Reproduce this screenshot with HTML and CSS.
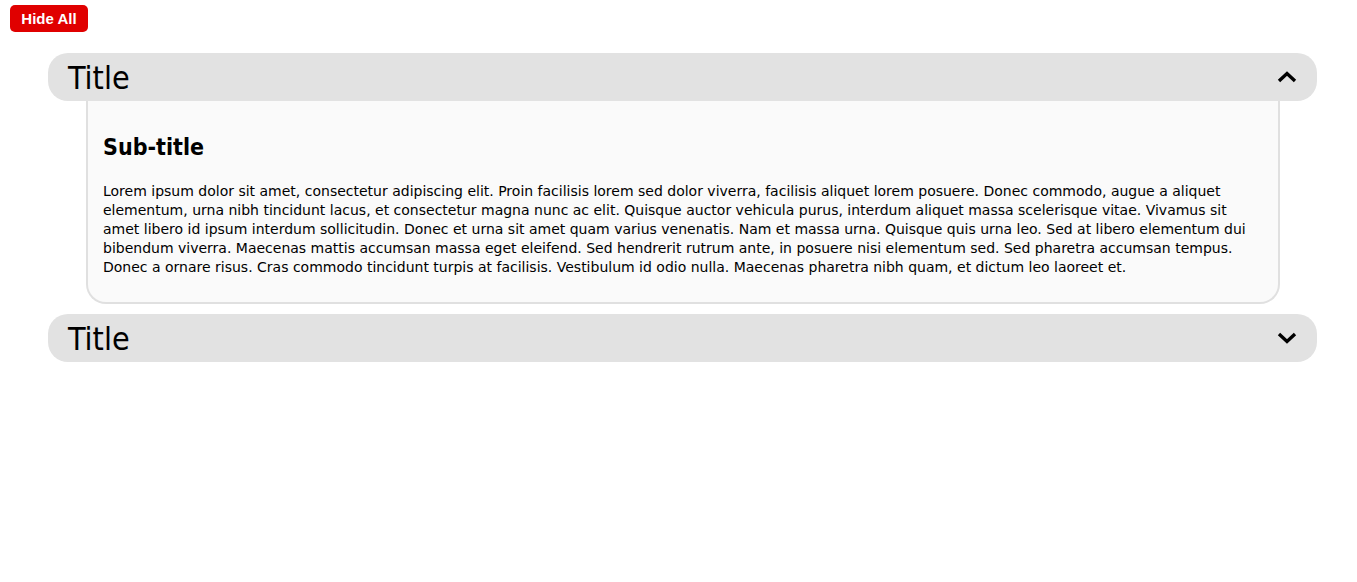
FILE: index.html
```html
<!DOCTYPE html>
<html>
<head>
<meta charset="utf-8">
<link rel="stylesheet" href="styles.css">
</head>
<body>
<div class="toolbar"><button class="hide-all">Hide All</button></div>
<div class="accordion">
  <div class="item open">
    <div class="header">
      <span class="title">Title</span>
      <svg class="chev" width="20" height="12" viewBox="0 0 20 12"><path d="M2 10 L10 2.5 L18 10" fill="none" stroke="#000" stroke-width="3.4"/></svg>
    </div>
    <div class="panel">
      <h2 class="subtitle">Sub-title</h2>
      <p class="text">Lorem ipsum dolor sit amet, consectetur adipiscing elit. Proin facilisis lorem sed dolor viverra, facilisis aliquet lorem posuere. Donec commodo, augue a aliquet elementum, urna nibh tincidunt lacus, et consectetur magna nunc ac elit. Quisque auctor vehicula purus, interdum aliquet massa scelerisque vitae. Vivamus sit amet libero id ipsum interdum sollicitudin. Donec et urna sit amet quam varius venenatis. Nam et massa urna. Quisque quis urna leo. Sed at libero elementum dui bibendum viverra. Maecenas mattis accumsan massa eget eleifend. Sed hendrerit rutrum ante, in posuere nisi elementum sed. Sed pharetra accumsan tempus. Donec a ornare risus. Cras commodo tincidunt turpis at facilisis. Vestibulum id odio nulla. Maecenas pharetra nibh quam, et dictum leo laoreet et.</p>
    </div>
  </div>
  <div class="item">
    <div class="header">
      <span class="title">Title</span>
      <svg class="chev" width="20" height="12" viewBox="0 0 20 12"><path d="M2 2 L10 9.5 L18 2" fill="none" stroke="#000" stroke-width="3.4"/></svg>
    </div>
  </div>
</div>
</body>
</html>
```
FILE: styles.css
```css
body {
  margin: 0;
  font-family: "DejaVu Sans Condensed", "DejaVu Sans", sans-serif;
  background: #fff;
  color: #000;
}
.toolbar {
  padding: 5px 10px 0;
  height: 28px;
}
.hide-all {
  background: #e00000;
  color: #fff;
  border: none;
  border-radius: 5px;
  font-family: "Liberation Sans", Arial, sans-serif;
  font-weight: bold;
  font-size: 15px;
  height: 27px;
  width: 78px;
  padding: 0;
}
.accordion {
  margin: 20px 40px 0 48px;
  display: flex;
  flex-direction: column;
  gap: 10px;
}
.header {
  background: #e2e2e2;
  border-radius: 20px;
  height: 48px;
  display: flex;
  align-items: center;
  justify-content: space-between;
  padding: 3px 20px 0 20px;
  box-sizing: border-box;
}
.title {
  font-size: 32px;
  line-height: 45px;
}
.chev { display: block; margin-top: -3px; }
.panel {
  margin: 0 37px 0 38px;
  background: #fafafa;
  border: 2px solid #e0e0e0;
  border-top: none;
  border-radius: 0 0 20px 20px;
  padding: 28px 15px 25px 15px;
}
.subtitle {
  margin: 0 0 17px;
  font-size: 23px;
  line-height: 36px;
  font-weight: bold;
}
.text {
  margin: 0;
  font-family: "DejaVu Sans", sans-serif;
  font-size: 14px;
  line-height: 19px;
  letter-spacing: 0;
}
```
